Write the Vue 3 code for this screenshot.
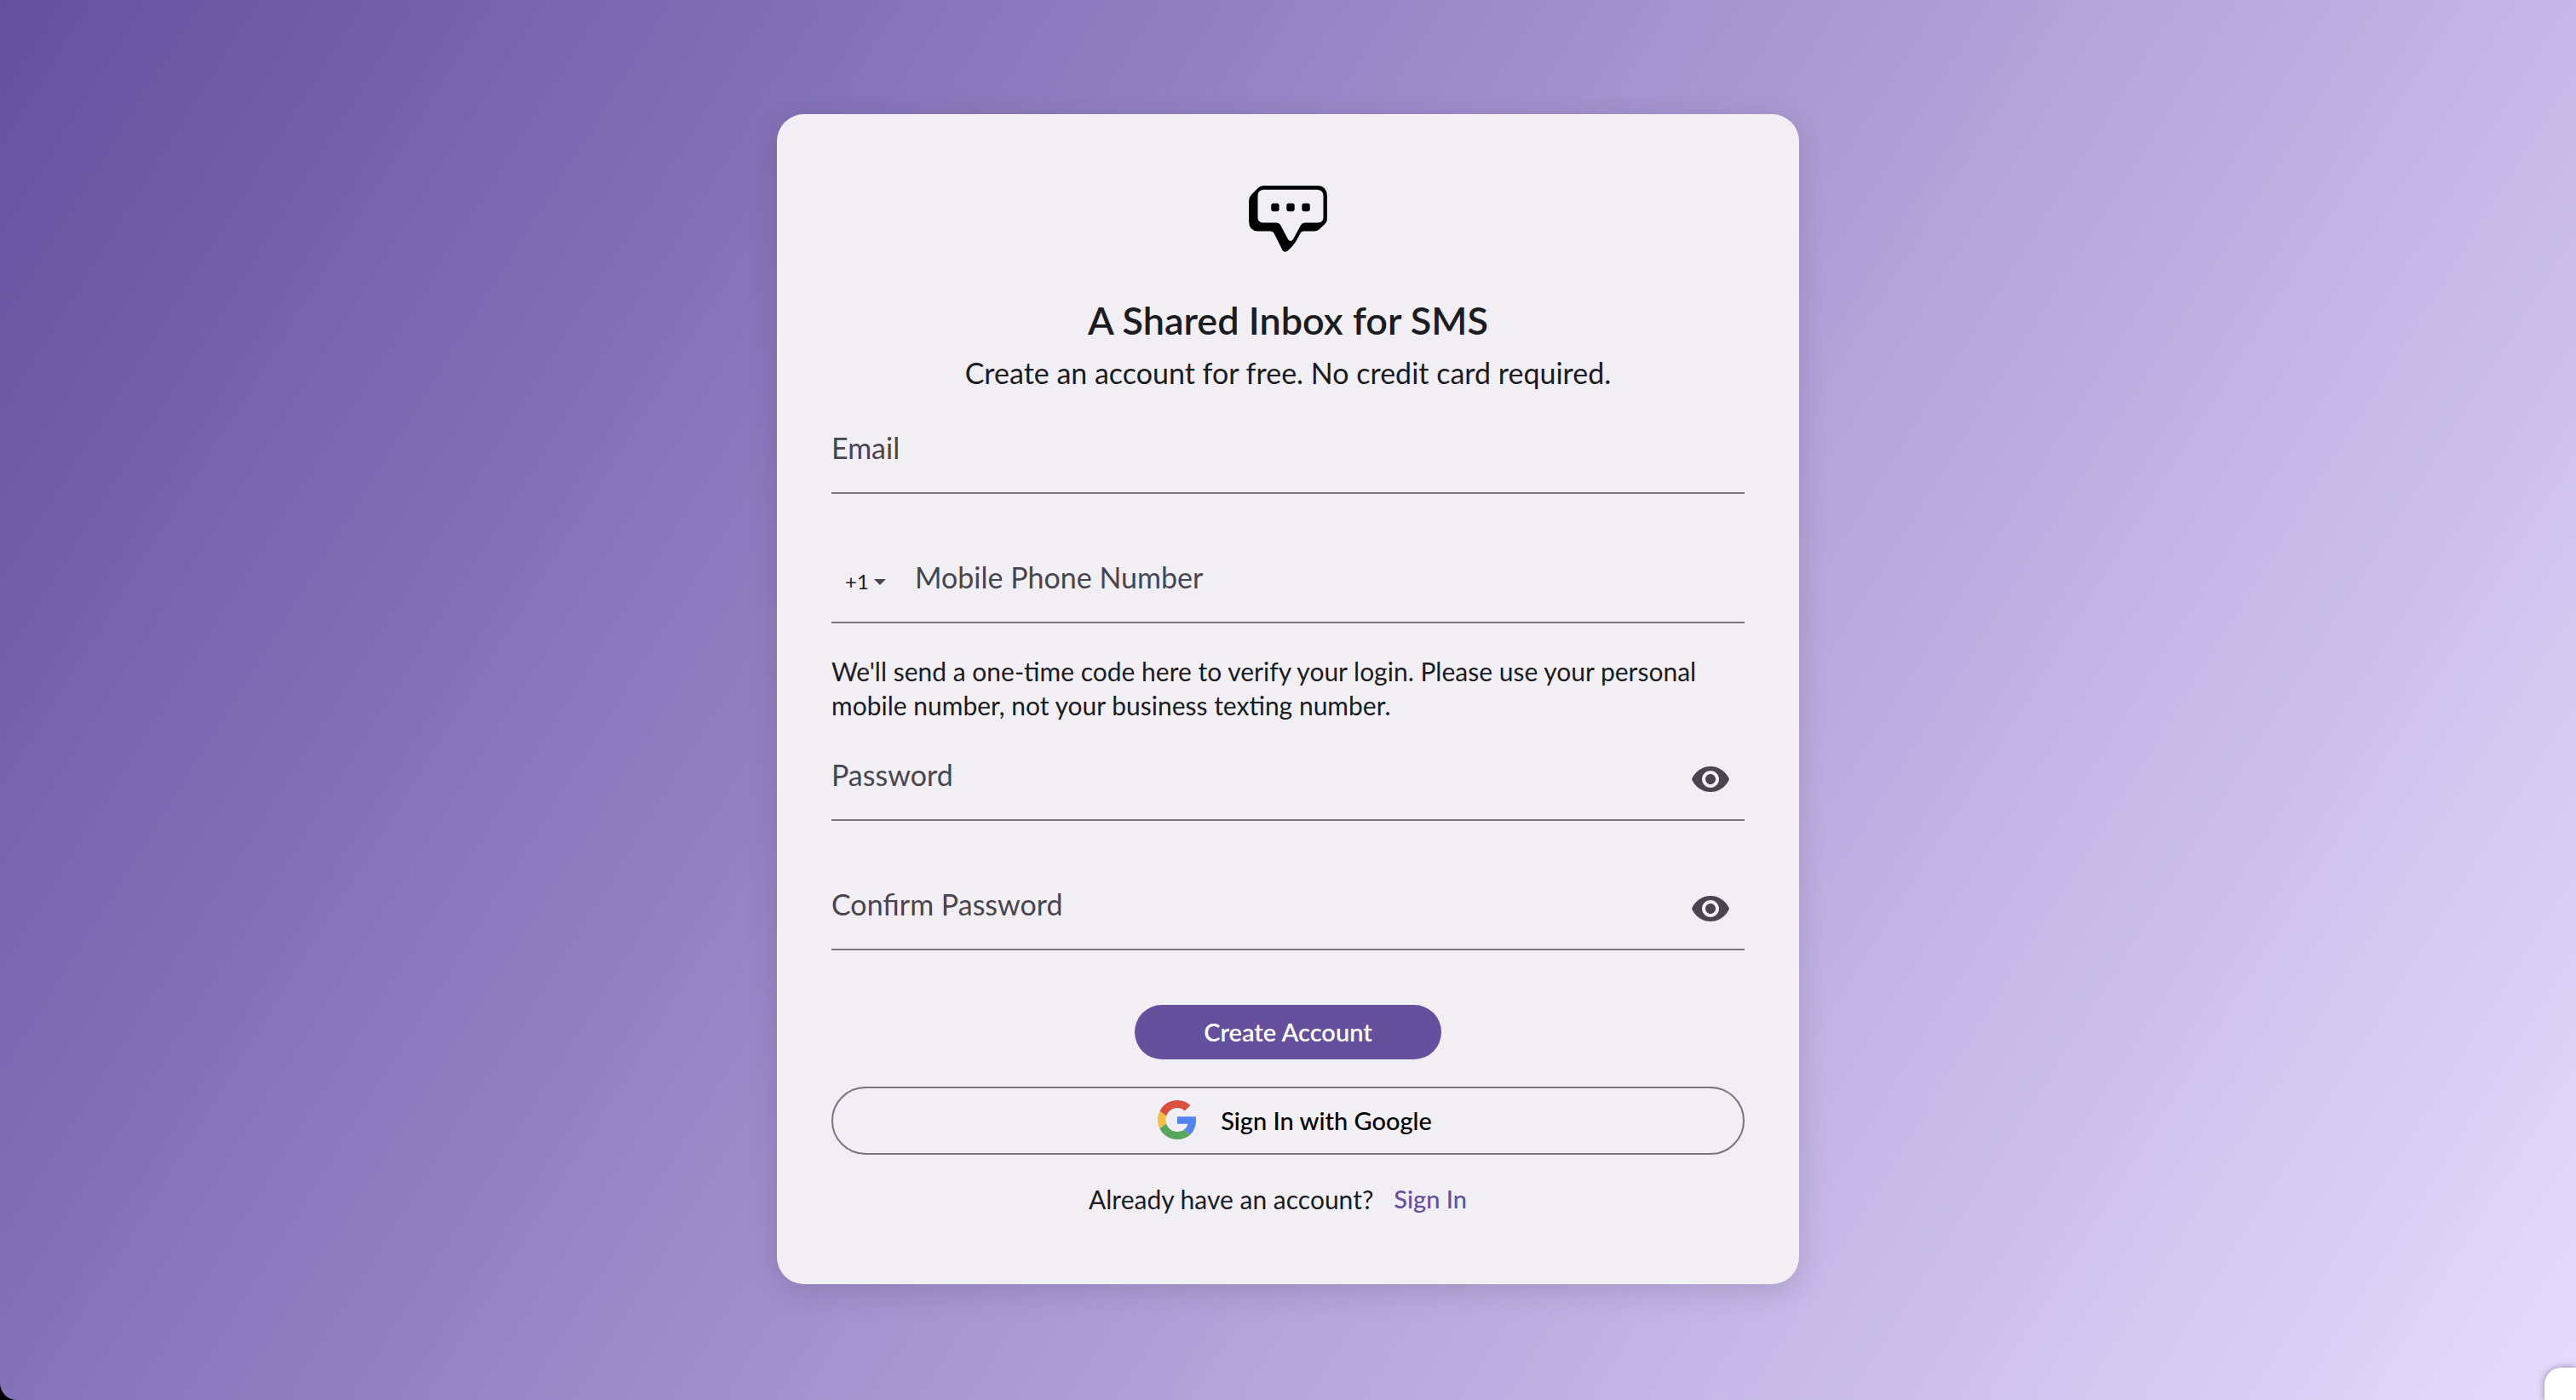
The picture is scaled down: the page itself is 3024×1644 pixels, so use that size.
<script setup>
import { reactive, ref } from 'vue'

const countryCodes = ['+1']
const form = reactive({ email: '', country: '+1', phone: '', password: '', confirm: '' })
const shown = reactive({ password: false, confirm: false })
const submitted = ref(false)

const passwordFields = [
  { id: 'password', label: 'Password' },
  { id: 'confirm', label: 'Confirm Password' },
]
</script>

<template>
  <div class="backdrop">
    <main class="page">
      <form class="card" @submit.prevent="submitted = true">
        <svg class="logo" viewBox="79 57 274 233" aria-hidden="true">
          <path
            fill-rule="evenodd"
            d="M130 57H322Q353 60 353 92V176Q353 184 347 190L326 210Q318 217 308 217H271Q264 217 260 223L243 254Q230 272 216 285Q205 294 197 284L167 224Q163 217 155 217H110Q79 214 79 183V110Q79 97 88 88L110 66Q119 57 130 57ZM130 71Q110 73 110 92V168Q110 186 128 187H174Q185 187 190 196L216 245Q225 257 234 245L261 195Q266 187 275 187H322Q340 186 340 168V92Q339 73 320 71Z"
          />
          <rect x="157" y="119" width="28" height="28" rx="8" />
          <rect x="211" y="119" width="28" height="28" rx="8" />
          <rect x="265" y="119" width="28" height="28" rx="8" />
        </svg>

        <h1 class="title">A Shared Inbox for SMS</h1>
        <p class="subtitle">Create an account for free. No credit card required.</p>

        <div class="field first">
          <div class="control" :class="{ filled: form.email }">
            <label for="email">Email</label>
            <input id="email" v-model="form.email" type="email" autocomplete="email" />
          </div>
        </div>

        <div class="field">
          <div class="country">
            <select v-model="form.country" aria-label="Country code">
              <option v-for="code in countryCodes" :key="code" :value="code">{{ code }}</option>
            </select>
            <svg class="caret" viewBox="0 0 14 7" aria-hidden="true"><path d="M0 0H14L7 7Z" /></svg>
          </div>
          <div class="control" :class="{ filled: form.phone }">
            <label for="phone">Mobile Phone Number</label>
            <input id="phone" v-model="form.phone" type="tel" autocomplete="tel" />
          </div>
        </div>

        <p class="help">
          We'll send a one-time code here to verify your login. Please use your personal mobile
          number, not your business texting number.
        </p>

        <div v-for="item in passwordFields" :key="item.id" class="field">
          <div class="control" :class="{ filled: form[item.id] }">
            <label :for="item.id">{{ item.label }}</label>
            <input
              :id="item.id"
              v-model="form[item.id]"
              :type="shown[item.id] ? 'text' : 'password'"
              autocomplete="new-password"
            />
          </div>
          <button
            type="button"
            class="reveal"
            aria-label="Show password"
            @click="shown[item.id] = !shown[item.id]"
          >
            <svg viewBox="0 0 24 24" aria-hidden="true">
              <path
                d="M12 4.5C7 4.5 2.73 7.61 1 12c1.73 4.39 6 7.5 11 7.5s9.27-3.11 11-7.5c-1.73-4.39-6-7.5-11-7.5zM12 17c-2.76 0-5-2.24-5-5s2.24-5 5-5 5 2.24 5 5-2.24 5-5 5zm0-8c-1.66 0-3 1.34-3 3s1.34 3 3 3 3-1.34 3-3-1.34-3-3-3z"
              />
            </svg>
          </button>
        </div>

        <button type="submit" class="primary">Create Account</button>

        <button type="button" class="google">
          <svg viewBox="0 0 48 48" aria-hidden="true">
            <path fill="#d95040" d="M24 9.5c3.54 0 6.71 1.22 9.21 3.6l6.85-6.85C35.9 2.38 30.47 0 24 0 14.62 0 6.51 5.38 2.56 13.22l7.98 6.19C12.43 13.72 17.74 9.5 24 9.5z" />
            <path fill="#5383ec" d="M46.98 24.55c0-1.57-.15-3.09-.38-4.55H24v9.02h12.94c-.58 2.96-2.26 5.48-4.78 7.18l7.73 6c4.51-4.18 7.09-10.36 7.09-17.65z" />
            <path fill="#f2bd42" d="M10.53 28.59c-.48-1.45-.76-2.99-.76-4.59s.27-3.14.76-4.59l-7.98-6.19C.92 16.46 0 20.12 0 24c0 3.88.92 7.54 2.56 10.78l7.97-6.19z" />
            <path fill="#58a55c" d="M24 48c6.48 0 11.93-2.13 15.89-5.81l-7.73-6c-2.15 1.45-4.92 2.3-8.16 2.3-6.26 0-11.57-4.22-13.47-9.91l-7.98 6.19C6.51 42.62 14.62 48 24 48z" />
          </svg>
          <span>Sign In with Google</span>
        </button>

        <p class="footer">
          <span>Already have an account?</span>
          <a href="#sign-in">Sign In</a>
        </p>
      </form>
    </main>
    <aside class="chat" aria-label="Chat"></aside>
  </div>
</template>

<style>
body {
  margin: 0;
  background: #000;
}
</style>

<style scoped>
.backdrop {
  font-family: Lato, "Open Sans", sans-serif;
  color: #1c1b1f;
}

.page {
  box-sizing: border-box;
  min-height: 100vh;
  display: flex;
  justify-content: center;
  align-items: flex-start;
  padding: 134px 16px 136px;
  border-bottom-left-radius: 20px;
  background: linear-gradient(122deg, #64509d 0%, #8473b8 26%, #b7a8dc 64%, #e4dcfc 100%);
}

.card {
  box-sizing: border-box;
  width: 100%;
  max-width: 1200px;
  display: flex;
  flex-direction: column;
  align-items: stretch;
  padding: 84px 64px 80px;
  border-radius: 32px;
  background: #f1eff4;
  box-shadow: 0 8px 32px rgba(60, 40, 70, 0.18);
}

.logo {
  width: 92px;
  height: 78px;
  align-self: center;
}

.title {
  margin: 52px 0 0;
  font-size: 45px;
  line-height: 56px;
  font-weight: 600;
  text-align: center;
}

.subtitle {
  margin: 10px 0 0;
  font-size: 34px;
  line-height: 48px;
  text-align: center;
}

.field {
  box-sizing: border-box;
  height: 112px;
  margin-top: 40px;
  display: flex;
  border-bottom: 2px solid #79747e;
}

.field.first {
  margin-top: 6px;
}

.control {
  flex: 1;
  display: grid;
}

.control label,
.control input {
  grid-area: 1 / 1;
  box-sizing: border-box;
  min-width: 0;
  padding: 38px 0 32px;
  font: inherit;
  font-size: 34px;
  line-height: 40px;
}

.control label {
  color: #49454f;
}

.control.filled label {
  opacity: 0;
}

.control input {
  width: 100%;
  border: 0;
  outline: 0;
  background: transparent;
  color: inherit;
}

.field:focus-within {
  border-color: #64509d;
}

.country {
  box-sizing: border-box;
  width: 98px;
  display: flex;
  align-items: center;
  gap: 4px;
  padding: 16px 0 0 16px;
}

.country select {
  width: 30px;
  padding: 0;
  border: 0;
  appearance: none;
  background: transparent;
  color: inherit;
  font: inherit;
  font-size: 24px;
  line-height: 32px;
}

.caret {
  width: 14px;
  height: 7px;
  fill: #49454f;
}

.help {
  margin: 36px 0 0;
  font-size: 30px;
  line-height: 40px;
}

.help + .field {
  margin-top: 4px;
}

.reveal {
  width: 80px;
  padding: 16px 0 0;
  border: 0;
  background: transparent;
  cursor: pointer;
}

.reveal svg {
  display: block;
  width: 48px;
  height: 48px;
  margin: 0 auto;
  fill: #49454f;
}

.primary {
  align-self: center;
  width: 360px;
  max-width: 100%;
  height: 64px;
  margin-top: 64px;
  padding: 0 0 2px;
  border: 0;
  border-radius: 32px;
  background: #64509d;
  color: #fff;
  font: inherit;
  font-size: 29px;
  font-weight: 600;
  cursor: pointer;
}

.google {
  box-sizing: border-box;
  height: 80px;
  margin-top: 32px;
  display: flex;
  align-items: center;
  justify-content: center;
  gap: 28px;
  padding: 0 0 2px 16px;
  border: 2px solid #79747e;
  border-radius: 40px;
  background: transparent;
  color: #000;
  font: inherit;
  font-size: 29px;
  font-weight: 500;
  cursor: pointer;
}

.google svg {
  width: 46px;
  height: 46px;
}

.footer {
  margin: 32px 0 0;
  display: flex;
  justify-content: center;
  font-size: 30px;
  line-height: 40px;
}

.footer a {
  padding: 0 24px;
  color: #64509d;
  font-size: 29px;
  font-weight: 500;
  text-decoration: none;
}

.chat {
  position: fixed;
  right: 0;
  bottom: 0;
  width: 37px;
  height: 38px;
  border-top-left-radius: 20px;
  background: #fff;
  box-shadow: 0 0 8px rgba(60, 40, 90, 0.5);
}
</style>
